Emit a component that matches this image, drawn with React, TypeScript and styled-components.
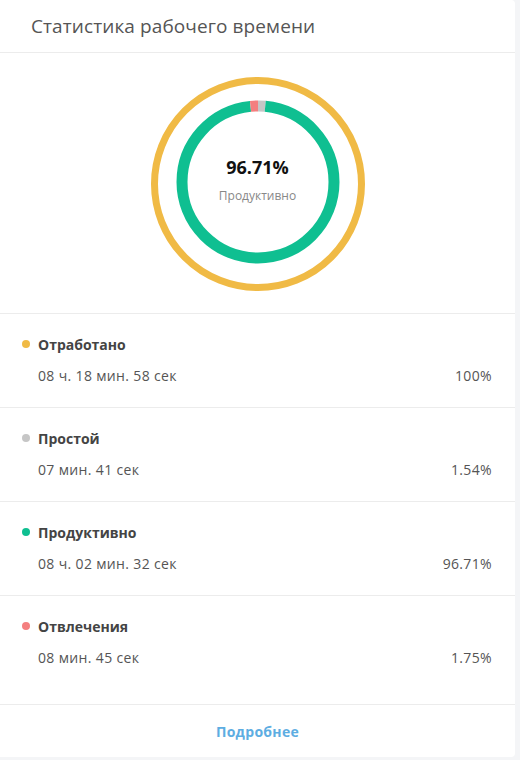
import styled, { createGlobalStyle } from 'styled-components';

const GlobalStyle = createGlobalStyle`
  body {
    margin: 0;
    background: #f4f5f7;
    font-family: 'Open Sans', 'Noto Sans', sans-serif;
  }
`;

const Card = styled.div`
  width: 515px;
  height: 757px;
  background: #fff;
  border-radius: 0 4px 4px 0;
  display: flex;
  flex-direction: column;
`;

const Header = styled.div`
  height: 52px;
  padding-left: 31px;
  display: flex;
  align-items: center;
  font-size: 19px;
  letter-spacing: 0.1px;
  color: #555;
  border-bottom: 1px solid #ececec;
`;

const ChartSection = styled.div`
  height: 260px;
  display: flex;
  align-items: center;
  justify-content: center;
  border-bottom: 1px solid #ececec;
`;

const ChartBox = styled.div`
  position: relative;
  width: 216px;
  height: 216px;
  margin-top: 1px;
`;

const ChartCenter = styled.div`
  position: absolute;
  inset: 0;
  display: flex;
  flex-direction: column;
  align-items: center;
  justify-content: center;
  padding-bottom: 8px;
`;

const Percent = styled.div`
  font-size: 18px;
  font-weight: 700;
  color: #111;
`;

const CenterLabel = styled.div`
  margin-top: 8px;
  font-size: 12px;
  color: #888;
`;

const Row = styled.div<{ $tall?: boolean }>`
  height: ${(p) => (p.$tall ? 109 : 94)}px;
  padding: 20px 23px 0 22px;
  box-sizing: border-box;
  border-bottom: 1px solid #ececec;
`;

const LabelLine = styled.div`
  display: flex;
  align-items: center;
  gap: 8px;
  height: 20px;
  font-size: 14px;
  font-weight: 700;
  color: #444;
`;

const Dot = styled.span<{ $color: string }>`
  width: 8px;
  height: 8px;
  border-radius: 50%;
  background: ${(p) => p.$color};
`;

const ValueLine = styled.div`
  display: flex;
  justify-content: space-between;
  align-items: center;
  margin-top: 11px;
  height: 20px;
  padding-left: 16px;
  font-size: 14px;
  letter-spacing: 0.35px;
  color: #555;
`;

const Footer = styled.div`
  flex: 1;
  display: flex;
  align-items: center;
  justify-content: center;
  padding-top: 1px;
  font-size: 14px;
  font-weight: 700;
  letter-spacing: 0.3px;
  color: #5dade2;
`;

const YELLOW = '#f0ba45';
const GREEN = '#0fbf91';
const GRAY = '#c6c6c6';
const RED = '#f47f7f';

const stats = [
  { label: 'Отработано', time: '08 ч. 18 мин. 58 сек', pct: '100%', color: YELLOW },
  { label: 'Простой', time: '07 мин. 41 сек', pct: '1.54%', color: GRAY },
  { label: 'Продуктивно', time: '08 ч. 02 мин. 32 сек', pct: '96.71%', color: GREEN },
  { label: 'Отвлечения', time: '08 мин. 45 сек', pct: '1.75%', color: RED },
];

const Ring = () => {
  const r = 76;
  const c = 2 * Math.PI * r;
  const parts = [
    { v: 1.54, color: GRAY },
    { v: 96.71, color: GREEN },
    { v: 1.75, color: RED },
  ];
  let offset = 0;
  return (
    <svg width="216" height="216" viewBox="0 0 216 216">
      <circle cx="108" cy="108" r="103.5" fill="none" stroke={YELLOW} strokeWidth="7" />
      <g transform="rotate(-90 108 106)">
        {parts.map((p) => {
          const len = (p.v / 100) * c;
          const el = (
            <circle
              key={p.color}
              cx="108"
              cy="106"
              r={r}
              fill="none"
              stroke={p.color}
              strokeWidth="11"
              strokeDasharray={`${len} ${c - len}`}
              strokeDashoffset={-offset}
            />
          );
          offset += len;
          return el;
        })}
      </g>
    </svg>
  );
};

export default function App() {
  return (
    <>
      <GlobalStyle />
      <Card>
        <Header>Статистика рабочего времени</Header>
        <ChartSection>
          <ChartBox>
            <Ring />
            <ChartCenter>
              <Percent>96.71%</Percent>
              <CenterLabel>Продуктивно</CenterLabel>
            </ChartCenter>
          </ChartBox>
        </ChartSection>
        {stats.map((s, i) => (
          <Row key={s.label} $tall={i === stats.length - 1}>
            <LabelLine>
              <Dot $color={s.color} />
              {s.label}
            </LabelLine>
            <ValueLine>
              <span>{s.time}</span>
              <span>{s.pct}</span>
            </ValueLine>
          </Row>
        ))}
        <Footer>Подробнее</Footer>
      </Card>
    </>
  );
}
